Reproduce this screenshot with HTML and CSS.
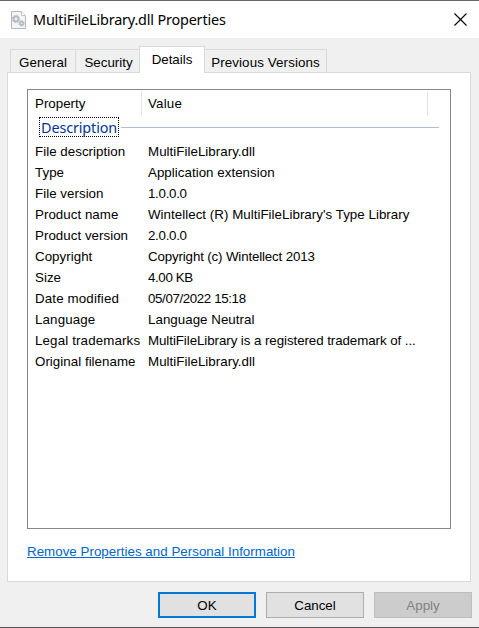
FILE: index.html
```html
<!DOCTYPE html>
<html lang="en">
<head>
<meta charset="utf-8">
<title>MultiFileLibrary.dll Properties</title>
<link rel="stylesheet" href="styles.css">
</head>
<body>
<main class="dialog">
  <header class="titlebar">
    <svg class="file-icon" width="15" height="18" viewBox="0 0 15 18">
      <path d="M.5.5h10l4 4v13H.5z" fill="#f5f5f5" stroke="#b7b7b7"/>
      <path d="M10.5.5v4h4" fill="#fff" stroke="#c4c4c4"/>
      <circle cx="5" cy="8" r="2.4" fill="none" stroke="#b4bdc3" stroke-width="2"/>
      <circle cx="5" cy="8" r="3.7" fill="none" stroke="#b4bdc3" stroke-width="1" stroke-dasharray="1.5 1.4"/>
      <circle cx="10.5" cy="12.3" r="1.7" fill="none" stroke="#b4bdc3" stroke-width="1.8"/>
      <circle cx="10.5" cy="12.3" r="2.8" fill="none" stroke="#b4bdc3" stroke-width=".9" stroke-dasharray="1.2 1"/>
    </svg>
    <h1>MultiFileLibrary.dll Properties</h1>
    <svg class="close" width="13" height="13" viewBox="0 0 13 13"><path d="M.5.5l12 12M12.5.5l-12 12" stroke="#000" stroke-width="1.1"/></svg>
  </header>
  <nav class="tabs">
    <span class="tab general">General</span>
    <span class="tab security">Security</span>
    <span class="tab active">Details</span>
    <span class="tab previous">Previous Versions</span>
  </nav>
  <section class="page">
    <div class="list">
      <div class="head"><span>Property</span><span>Value</span></div>
      <div class="group"><span class="group-name">Description</span><i></i></div>
      <dl>
        <dt>File description</dt><dd>MultiFileLibrary.dll</dd>
        <dt>Type</dt><dd>Application extension</dd>
        <dt>File version</dt><dd class="digits">1.0.0.0</dd>
        <dt>Product name</dt><dd>Wintellect (R) MultiFileLibrary's Type Library</dd>
        <dt>Product version</dt><dd class="digits">2.0.0.0</dd>
        <dt>Copyright</dt><dd class="copyright">Copyright (c) Wintellect 2013</dd>
        <dt>Size</dt><dd class="number">4.00 KB</dd>
        <dt class="wide">Date modified</dt><dd class="number">05/07/2022 15:18</dd>
        <dt class="wide">Language</dt><dd>Language Neutral</dd>
        <dt class="wide">Legal trademarks</dt><dd class="tight">MultiFileLibrary is a registered trademark of ...</dd>
        <dt>Original filename</dt><dd>MultiFileLibrary.dll</dd>
      </dl>
    </div>
    <a class="link">Remove Properties and Personal Information</a>
  </section>
  <footer class="actions">
    <button class="ok">OK</button>
    <button>Cancel</button>
    <button class="apply" disabled>Apply</button>
  </footer>
</main>
</body>
</html>
```
FILE: styles.css
```css
* { box-sizing: border-box; }
body { margin: 0; background: #f0f0f0; color: #000; font: 13.33px "Liberation Sans", Arial, sans-serif; }
.dialog { height: 628px; display: flex; flex-direction: column; border-top: 1px solid #6a686b; border-bottom: 1px solid #55534f; overflow: hidden; }
.titlebar { height: 37px; flex: none; background: #fff; display: flex; align-items: center; padding: 0 12px 0 11px; }
.file-icon { margin-right: 7px; }
h1 { margin: 0; flex: 1; font: 14.4px/20px "Noto Sans", sans-serif; letter-spacing: -0.17px; white-space: nowrap; }
.close { flex: none; }
.tabs { height: 34px; flex: none; padding-left: 10px; display: flex; align-items: flex-end; }
.tab { height: 23px; border: 1px solid #d9d9d9; border-width: 1px 1px 0 0; text-align: center; line-height: 25px; white-space: nowrap; }
.general { width: 66px; border-left-width: 1px; letter-spacing: 0.08px; }
.security { width: 63px; border-right: 0; padding-left: 2px; }
.active { width: 66px; height: 27px; margin-bottom: -1px; border-left-width: 1px; background: #fff; z-index: 1; }
.previous { width: 122px; letter-spacing: 0.12px; }
.page { width: 464px; height: 510px; flex: none; margin-left: 7px; background: #fff; border: 1px solid #d9d9d9; padding: 16px 19px; }
.list { width: 424px; height: 440px; border: 1px solid #828790; padding-top: 1px; }
.head { display: grid; grid-template-columns: 114px 286px; height: 24px; line-height: 25px; }
.head span { border-right: 1px solid #e5e5e5; padding-left: 7px; }
.head span + span { padding-left: 6px; letter-spacing: 0.2px; }
.group { display: flex; align-items: center; margin: 2px 11px 0; height: 20px; }
.group-name { width: 80px; height: 20px; border: 1px dotted #000; color: #003399; font: 14.4px/19px "Noto Sans", sans-serif; letter-spacing: -0.12px; padding-left: 1px; white-space: nowrap; }
.group i { flex: 1; height: 1px; margin-left: 2px; background: #b0bbdd; }
dl { display: grid; grid-template-columns: 113px 290px; grid-auto-rows: 21px; margin: 4px 0 0 7px; line-height: 21px; letter-spacing: 0.03px; white-space: nowrap; }
dd { margin: 0; }
.wide { letter-spacing: 0.14px; }
.digits { letter-spacing: -0.3px; }
.number { letter-spacing: -0.38px; }
.copyright { letter-spacing: -0.15px; }
.tight { letter-spacing: -0.07px; }
.link { display: inline-block; margin-top: 14px; line-height: 17px; letter-spacing: 0.03px; color: #0066cc; text-decoration: underline; white-space: nowrap; }
.actions { display: flex; justify-content: flex-end; gap: 10px; padding: 10px 7px 0 0; }
button { width: 98px; height: 26px; border: 1px solid #adadad; background: #e1e1e1; color: #000; font: inherit; padding: 0; }
.ok { border: 2px solid #0078d7; }
.apply { background: #ccc; border-color: #bfbfbf; color: #838383; }
```
